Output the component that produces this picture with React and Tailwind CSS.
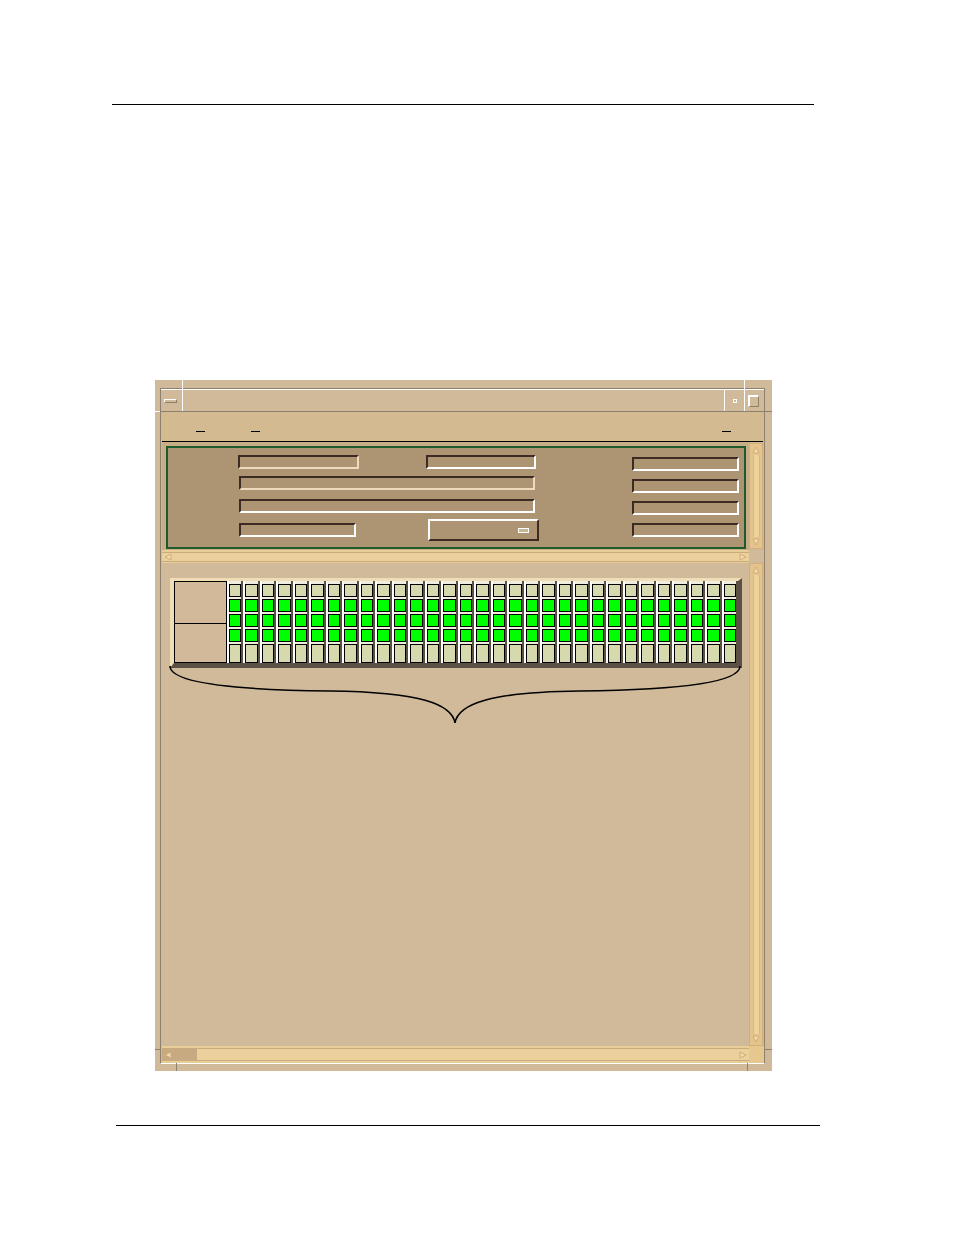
const COLS = Array.from({ length: 31 }, (_, i) => i);

const Arrow = ({ dir }) => {
  const pts = {
    up: "1,7 4,1 7,7",
    down: "1,1 4,7 7,1",
    left: "7,1 1,4 7,7",
    right: "1,1 7,4 1,7",
  }[dir];
  return (
    <svg width="8" height="8" viewBox="0 0 8 8" className="shrink-0">
      <polygon points={pts} fill="#f3dcab" stroke="#cfad78" strokeWidth="1" />
    </svg>
  );
};

const VScroll = ({ className }) => (
  <div
    className={`flex flex-col items-center border border-[#d2b07a] bg-[#e4c48c] py-[2px] ${className}`}
  >
    <Arrow dir="up" />
    <div className="flex-1 w-[7px] my-[1px] bg-[#edd29c] border-x border-[#d7b783]" />
    <Arrow dir="down" />
  </div>
);

const HScroll = ({ className, thumb }) => (
  <div className={`flex flex-col bg-[#e9cd97] ${className}`}>
    <div className="flex-1 flex items-center my-[2px] border-y border-[#c9ab7d] bg-[#ebd09b] pr-[2px]">
      {thumb ? (
        <div className="h-full w-[35px] bg-[#c7a982] flex items-center pl-[2px]">
          <Arrow dir="left" />
        </div>
      ) : (
        <div className="pl-[2px] flex items-center">
          <Arrow dir="left" />
        </div>
      )}
      <div className="flex-1" />
      <Arrow dir="right" />
    </div>
  </div>
);

const fieldDark = "border-t-2 border-l-2 border-t-[#3b2b22] border-l-[#3b2b22]";

function Slot() {
  return (
    <div className="flex h-full">
      <div className="w-[2px] bg-white" />
      <div className="flex-1 flex flex-col pt-[3px] gap-[2px] bg-[#efeedd]">
        <div className="h-[13px] border border-black bg-[#d6d8ae]" />
        <div className="h-[13px] border border-black bg-[#00ff00]" />
        <div className="h-[13px] border border-black bg-[#00ff00]" />
        <div className="h-[13px] border border-black bg-[#00ff00]" />
        <div className="flex-1 border border-black bg-[#d6d8ae]" />
      </div>
      <div className="w-[2px] bg-[#5c5044]" />
    </div>
  );
}

export default function App() {
  return (
    <div
      className="w-[954px] h-[1235px] bg-white overflow-hidden"
      style={{ fontFamily: '"Liberation Sans", Arial, sans-serif' }}
    >
      <div className="pt-[104px]">
        <div className="ml-[112px] w-[702px] h-px bg-black" />
      </div>

      {/* window */}
      <div className="relative mt-[275px] ml-[155px] w-[617px] h-[691px] bg-[#d0ba9a] pt-[8px] pl-[5px] pr-[7px]">
        {/* frame resize marks */}
        <div className="absolute left-[27px] top-0 w-px h-[31px] bg-white" />
        <div className="absolute left-[589px] top-0 w-px h-[31px] bg-white" />
        <div className="absolute left-0 top-[31px] w-[5px] h-px bg-white" />
        <div className="absolute left-[610px] top-[31px] w-[7px] h-px bg-[#8c806e]" />
        <div className="absolute left-[21px] top-[683px] w-px h-[8px] bg-[#8c806e]" />
        <div className="absolute left-[592px] top-[683px] w-px h-[8px] bg-[#8c806e]" />
        <div className="absolute left-0 top-[669px] w-[5px] h-px bg-[#8c806e]" />
        <div className="absolute left-[610px] top-[669px] w-[7px] h-px bg-[#8c806e]" />

        <div className="h-[676px] flex flex-col border-t border-x border-[#8c806e] border-b border-b-white">
          {/* title bar */}
          <div className="h-[23px] flex border-t border-white border-b border-b-[#8c806e] bg-[#d0ba9a]">
            <div className="w-[21px] flex items-center pl-[3px] pt-[1px]">
              <div className="w-[13px] h-[4px] border-t border-l border-white border-b border-r border-b-[#8c806e] border-r-[#8c806e]" />
            </div>
            <div className="w-px bg-white" />
            <div className="flex-1" />
            <div className="w-px bg-white" />
            <div className="w-[19px] flex items-center pl-[8px] pt-[1px]">
              <div className="w-[4px] h-[4px] border border-white" />
            </div>
            <div className="w-px bg-white" />
            <div className="w-[19px] flex items-center pl-[3px]">
              <div className="w-[11px] h-[12px] border-t-2 border-l-2 border-white border-b border-r border-b-[#8c806e] border-r-[#8c806e]" />
            </div>
          </div>

          {/* menu bar */}
          <div className="h-[30px] bg-[#d3ba91] flex flex-col">
            <div className="flex-1 flex items-end pb-[9px]">
              <div className="ml-[35px] w-[9px] h-px bg-black" />
              <div className="ml-[46px] w-[9px] h-px bg-black" />
              <div className="ml-auto mr-[33px] w-[9px] h-px bg-black" />
            </div>
            <div className="mx-px h-px bg-black" />
          </div>

          {/* upper section */}
          <div className="h-[121px] flex">
            <div className="ml-px w-[587px] flex flex-col">
              <div className="h-[108px] bg-[#c8ae88] pt-[4px] pl-[4px] pr-[3px] pb-[1px]">
                <div className="h-[103px] border-2 border-[#1e5a2a] bg-[#ad9573] flex">
                  <div className="pl-[70px] pt-[7px] flex flex-col">
                    <div className="flex h-[14px]">
                      <div className={`w-[121px] h-[14px] ${fieldDark} border-b-2 border-r-2 border-b-[#eedbbd] border-r-[#eedbbd]`} />
                      <div className={`ml-[67px] w-[110px] h-[14px] ${fieldDark} border-b-2 border-r-2 border-b-white border-r-white`} />
                    </div>
                    <div className={`mt-[7px] ml-px w-[296px] h-[14px] ${fieldDark} border-b-2 border-r-2 border-b-[#eedbbd] border-r-[#eedbbd]`} />
                    <div className={`mt-[9px] ml-px w-[296px] h-[14px] ${fieldDark} border-b-2 border-r-2 border-b-white border-r-white`} />
                    <div className="mt-[6px] h-[22px] flex items-center">
                      <div className={`ml-px w-[117px] h-[14px] ${fieldDark} border-b-2 border-r-2 border-b-white border-r-white`} />
                      <div className="ml-[72px] w-[111px] h-[22px] flex items-center justify-end pr-[8px] border-t-2 border-l-2 border-white border-b-2 border-r-2 border-b-[#3b2b22] border-r-[#3b2b22]">
                        <div className="w-[11px] h-[5px] border border-white bg-[#c9b595]" />
                      </div>
                    </div>
                  </div>
                  <div className="ml-auto mr-[5px] pt-[9px] flex flex-col gap-[8px]">
                    {[0, 1, 2, 3].map((i) => (
                      <div
                        key={i}
                        className={`w-[107px] h-[14px] ${fieldDark} border-b-2 border-r-2 border-b-white border-r-white`}
                      />
                    ))}
                  </div>
                </div>
              </div>
              <HScroll className="h-[13px]" />
            </div>
            <VScroll className="w-[14px] h-[106px] mt-px" />
          </div>

          {/* lower section */}
          <div className="flex-1 flex">
            <div className="ml-px w-[587px] flex flex-col">
              <div className="h-[483px] bg-[#d0ba9a] pt-[15px]">
                <div className="ml-[8px] w-[572px] h-[90px] flex border-t-[3px] border-l-[4px] border-t-[#f0ddb8] border-l-[#f0ddb8] border-r-[4px] border-b-[5px] border-r-[#5c5044] border-b-[#5c5044]">
                  <div className="w-[53px] h-full flex flex-col border border-black bg-[#d1b999]">
                    <div className="h-[42px] border-b border-black" />
                    <div className="flex-1" />
                  </div>
                  <div className="flex-1 grid grid-cols-[repeat(31,minmax(0,1fr))]">
                    {COLS.map((i) => (
                      <Slot key={i} />
                    ))}
                  </div>
                </div>
                <svg
                  width="587"
                  height="60"
                  viewBox="162 665 587 60"
                  className="block -mt-[3px]"
                >
                  <path
                    d="M170 666 C170 684 240 690 330 691 C420 692 452 704 455 723 C458 704 490 692 580 691 C670 690 740 684 740 666"
                    fill="none"
                    stroke="#000"
                    strokeWidth="1.6"
                  />
                </svg>
              </div>
              <HScroll className="h-[17px]" thumb />
            </div>
            <div className="flex flex-col">
              <VScroll className="w-[14px] h-[483px]" />
              <div className="w-[15px] flex-1 bg-[#e6c88f]" />
            </div>
          </div>
        </div>
      </div>

      <div className="mt-[54px] ml-[116px] w-[704px] h-px bg-black" />
    </div>
  );
}
